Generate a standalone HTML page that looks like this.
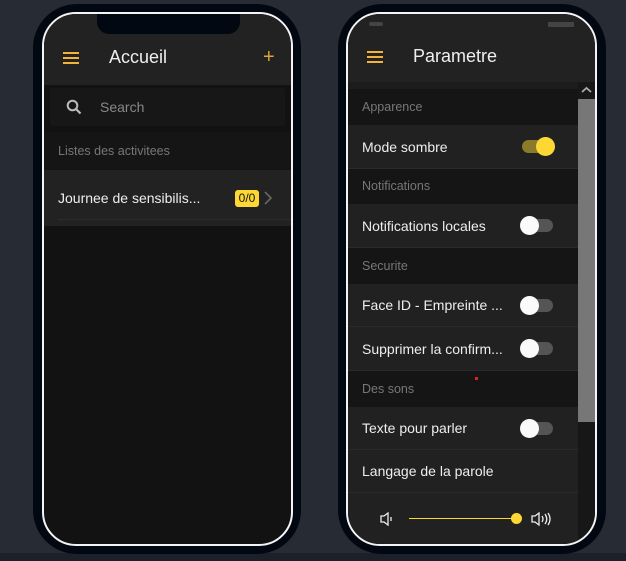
<!DOCTYPE html>
<html><head><meta charset="utf-8"><style>
*{margin:0;padding:0;box-sizing:border-box}
body{width:626px;height:561px;background:#262b34;font-family:"Liberation Sans",sans-serif;position:relative;overflow:hidden}
.band{position:absolute;left:0;top:553px;width:626px;height:8px;background:#1c2028}
.frame{position:absolute;top:4px;width:268px;height:550px;background:#020812;border-radius:44px}
.scr{position:absolute;top:12px;width:251px;height:534px;border:2px solid #f4f4f4;border-radius:34px;overflow:hidden;background:#121212}
.abs{position:absolute}
.hdr{position:absolute;left:0;top:0;width:100%;height:71px;background:#222}
.ham{position:absolute;width:16px;height:12px;border-top:2px solid #f3b23a;border-bottom:2px solid #f3b23a}
.ham:after{content:"";position:absolute;left:0;top:3px;width:16px;height:2px;background:#f3b23a}
.t{position:absolute;color:#eee;font-size:14px;white-space:nowrap}
.sec{position:absolute;left:0;width:230px;background:#151515;color:#777;font-size:12.5px;padding-left:14px}
.row{position:absolute;left:0;width:230px;background:#212121;color:#eee;font-size:14px;padding-left:14px;border-bottom:1px solid #2a2a2a}
.tg{position:absolute;left:174px;width:31px;height:13px;border-radius:7px;background:#555}
.tg i{position:absolute;left:-2px;top:-3px;width:19px;height:19px;border-radius:50%;background:#fafafa}
</style></head><body>
<div class="band"></div>
<div class="frame" style="left:33px"></div>
<div class="scr" style="left:42px">
  <div class="hdr"></div>
  <div class="abs" style="left:53px;top:-2px;width:143px;height:22px;background:#020812;border-radius:0 0 12px 12px"></div>
  <div class="ham" style="left:19px;top:38px"></div>
  <div class="t" style="left:65px;top:33px;font-size:18px">Accueil</div>
  <div class="t" style="left:219px;top:32px;font-size:20px;color:#e0a43a;font-weight:300">+</div>
  <div class="abs" style="left:6px;top:74px;width:235px;height:38px;background:#171717;border-radius:2px"></div>
  <svg class="abs" style="left:22px;top:85px" width="16" height="16" viewBox="0 0 16 16"><circle cx="6.5" cy="6.5" r="4.8" fill="none" stroke="#bbb" stroke-width="2"/><path d="M10 10l4.5 4.5" stroke="#bbb" stroke-width="2.2"/></svg>
  <div class="t" style="left:56px;top:85px;color:#888">Search</div>
  <div class="abs" style="left:0;top:118px;width:100%;height:38px;background:#151515"></div>
  <div class="t" style="left:14px;top:130px;font-size:12.5px;color:#777">Listes des activitees</div>
  <div class="abs" style="left:0;top:156px;width:100%;height:56px;background:#222"></div>
  <div class="abs" style="left:14px;top:205px;width:235px;height:1px;background:#2c2c2c"></div>
  <div class="t" style="left:14px;top:176px">Journee de sensibilis...</div>
  <div class="abs" style="left:191px;top:176px;width:24px;height:17px;background:#fdd835;border-radius:3px;color:#111;font-size:12px;text-align:center;line-height:17px">0/0</div>
  <svg class="abs" style="left:219px;top:177px" width="10" height="14" viewBox="0 0 10 14"><path d="M2 1l6 6-6 6" fill="none" stroke="#666" stroke-width="1.6"/></svg>
</div>

<div class="frame" style="left:338px"></div>
<div class="scr" style="left:346px">
  <div class="hdr" style="height:76px"></div>
  <div class="abs" style="left:21px;top:8px;width:14px;height:4px;background:#444;border-radius:2px"></div>
  <div class="abs" style="left:200px;top:8px;width:26px;height:5px;background:#444"></div>
  <div class="ham" style="left:19px;top:37px"></div>
  <div class="t" style="left:65px;top:32px;font-size:18px">Parametre</div>
  <div class="abs" style="left:0;top:68px;width:232px;height:7px;background:#1c1c1c"></div>
  <div class="abs" style="left:230px;top:68px;width:17px;height:466px;background:#171717"></div>
  <div class="abs" style="left:230px;top:85px;width:17px;height:323px;background:#777"></div>
  <svg class="abs" style="left:233px;top:72px" width="11" height="8" viewBox="0 0 11 8"><path d="M1 6l4.5-4 4.5 4" fill="none" stroke="#aaa" stroke-width="1.8"/></svg>
  <div class="sec" style="top:75px;height:36px;line-height:36px">Apparence</div>
  <div class="row" style="top:111px;height:44px;line-height:44px">Mode sombre<div class="tg" style="top:15px;background:#8a7a2a"><i style="left:14px;background:#fdd835"></i></div></div>
  <div class="sec" style="top:155px;height:35px;line-height:35px">Notifications</div>
  <div class="row" style="top:190px;height:44px;line-height:44px">Notifications locales<div class="tg" style="top:15px"><i></i></div></div>
  <div class="sec" style="top:234px;height:36px;line-height:36px">Securite</div>
  <div class="row" style="top:270px;height:43px;line-height:43px">Face ID - Empreinte ...<div class="tg" style="top:15px"><i></i></div></div>
  <div class="row" style="top:313px;height:44px;line-height:44px">Supprimer la confirm...<div class="tg" style="top:15px"><i></i></div></div>
  <div class="sec" style="top:357px;height:36px;line-height:36px">Des sons</div>
  <div class="abs" style="left:127px;top:363px;width:3px;height:3px;background:#d22"></div>
  <div class="row" style="top:393px;height:43px;line-height:43px">Texte pour parler<div class="tg" style="top:15px"><i></i></div></div>
  <div class="row" style="top:436px;height:43px;line-height:43px">Langage de la parole</div>
  <div class="abs" style="left:0;top:479px;width:230px;height:60px;background:#212121"></div>
  <svg class="abs" style="left:31px;top:497px" width="16" height="16" viewBox="0 0 16 16"><path d="M2 5h3l4-3v12l-4-3H2z" fill="none" stroke="#eee" stroke-width="1.3"/><path d="M12 6v4" stroke="#eee" stroke-width="1.3"/></svg>
  <div class="abs" style="left:61px;top:504px;width:108px;height:1px;background:#fdd835"></div>
  <div class="abs" style="left:163px;top:499px;width:11px;height:11px;border-radius:50%;background:#fdd835"></div>
  <svg class="abs" style="left:182px;top:497px" width="22" height="16" viewBox="0 0 22 16"><path d="M2 5h3l4-3v12l-4-3H2z" fill="none" stroke="#eee" stroke-width="1.3"/><path d="M12 5q2 3 0 6M15 3q3.5 5 0 10M18 2q4 6 0 12" fill="none" stroke="#eee" stroke-width="1.3"/></svg>
</div>
</body></html>
